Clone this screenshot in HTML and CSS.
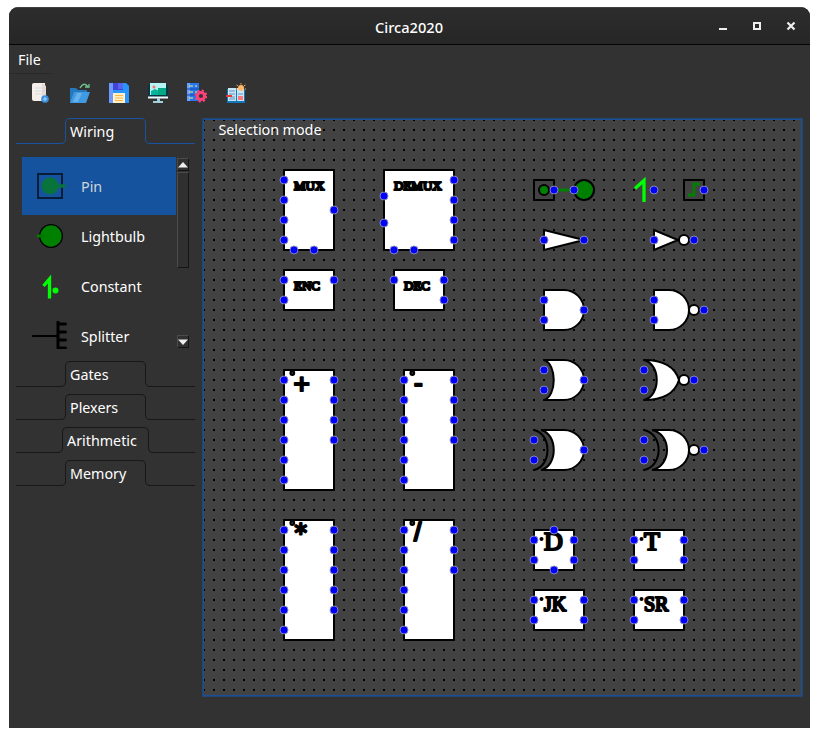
FILE: index.html
```html
<!DOCTYPE html>
<html lang="en">
<head>
<meta charset="utf-8">
<title>Circa2020</title>
<link rel="stylesheet" href="styles.css">
</head>
<body>
<div class="window">
  <header class="titlebar">
    <span class="title">Circa2020</span>
    <svg class="controls" width="80" height="12" viewBox="0 0 80 12"><path d="M1 8h8v2H1z" fill="#eee"/><path d="M36 3h6v6h-6z" fill="none" stroke="#eee" stroke-width="2"/><path d="M69.500 2.500l7 7M76.500 2.500l-7 7" stroke="#eee" stroke-width="2.200"/></svg>
  </header>
  <nav class="menubar"><span class="menu">File</span></nav>
  <div class="toolbar">
    <svg width="20" height="20" viewBox="0 0 20 20"><path d="M3 0h11v18H3q-2 0-2-2V2q0-2 2-2z" fill="#f5eeeb"/><path d="M11 0l4 3v13h-4z" fill="#e5d9d7"/><path d="M4 5h7M4 8h8M4 11h7" stroke="#d5dcde"/><circle cx="14" cy="16" r="3.800" fill="#3f91df"/><path d="M12 16h4M14 14v4" stroke="#a8d6ff"/></svg>
    <svg width="20" height="20" viewBox="0 0 20 20"><path d="M0 19V5h6l2 2h9v4z" fill="#2478bd"/><path d="M4 9h16l-4 11H0z" fill="#4199e2"/><path d="M7 10h5L8 19H3z" fill="#65b2ed"/><path d="M10 5q4-7 8-1" fill="none" stroke="#70c58d" stroke-width="1.500"/><path d="M15 4h4V1" fill="none" stroke="#70c58d" stroke-width="1.300"/></svg>
    <svg width="20" height="20" viewBox="0 0 20 20"><path d="M0 0h17l3 3v17H0z" fill="#2895ff"/><path d="M0 0h4v20H0z" fill="#6e9bff"/><path d="M4 0h10v7H4z" fill="#4044d7"/><path d="M9 0h5v6H9z" fill="#5963ed"/><path d="M4 10h12v10H4z" fill="#fff0c7"/><path d="M6 12.500h8M6 15h8M6 17.500h8" stroke="#ffb844"/></svg>
    <svg width="20" height="20" viewBox="0 0 20 20"><path d="M0 2h20v12H0z" fill="#083443"/><path d="M2 0h16v12H2z" fill="#b6f3f4"/><path d="M3 8l4-2 4 2 6-3v7H3z" fill="#05b49b"/><path d="M10 5h8v7h-8z" fill="#00a884"/><circle cx="6" cy="4" r="1.500" fill="#ff746d"/><path d="M0 13.500h20v2H0z" fill="#effcff"/><path d="M9 15h3v3h3v2H5v-2h4z" fill="#a4cedb"/></svg>
    <svg width="20" height="20" viewBox="0 0 20 20"><path d="M0 0h12v18H0z" fill="#2677ed"/><path d="M0 0h3v18H0z" fill="#64a0ff"/><path d="M0 6h12M0 12h12" stroke="#174bae"/><path d="M2 3h4M2 9h4M2 15h4" stroke="#ffe66c"/><path d="M8 3h2M8 9h2" stroke="#ffe66c"/><circle cx="14" cy="13" r="3.600" fill="#323232" stroke="#fc4279" stroke-width="3"/><circle cx="14" cy="13" r="5.500" fill="none" stroke="#fc4279" stroke-width="2" stroke-dasharray="2.160"/></svg>
    <svg width="20" height="20" viewBox="0 0 20 20"><path d="M1 6h18v14H1z" fill="#1177b6"/><path d="M2 5h8v13H2zM11 5h7v13h-7z" fill="#c9e6f6"/><path d="M3 8h6M3 11h6M12 11h5M4 14h5M3 16h6" stroke="#5994bc"/><path d="M0 12h6v2H0z" fill="#e83737"/><path d="M12 13h5v4h-5z" fill="#ff7777"/><circle cx="15" cy="5" r="3" fill="#ffb96d"/><path d="M15 0v1.500M10.500 2l1.500 1M19.500 2L18 3M10 6h1M19 6h1" stroke="#ffad38"/></svg>
  </div>
  <main class="workspace">
    <aside class="sidebar">
      <div class="tab active"><svg width="179" height="26" viewBox="0 0 179 26"><path d="M0 25.500H45Q49.500 25.500 49.500 21V5Q49.500.500 54 .500H125Q129.500.500 129.500 5V21Q129.500 25.500 134 25.500H179"/></svg><span class="tab-label">Wiring</span></div>
      <div class="panel">
        <div class="list">
          <div class="item selected"><svg width="40" height="30" viewBox="32 171 40 30"><path d="M38 174h24v24H38z" fill="none" stroke="#071d38" stroke-width="2"/><path d="M54 186h10" stroke="#08743b" stroke-width="3.500" stroke-linecap="round"/><circle cx="50" cy="186" r="8.500" fill="#08743b"/></svg><span>Pin</span></div>
          <div class="item"><svg width="40" height="30" viewBox="32 221 40 30"><circle cx="51" cy="236" r="11.300" fill="#008000" stroke="#000" stroke-width="1.300"/><path d="M38 236h4" stroke="#007800" stroke-width="3" stroke-linecap="round"/></svg><span>Lightbulb</span></div>
          <div class="item"><svg width="40" height="30" viewBox="32 271 40 30"><path d="M43.500 286l6-7v19.500" fill="none" stroke="#0f0" stroke-width="3.300"/><circle cx="55.500" cy="290.500" r="3" fill="#0f0"/></svg><span>Constant</span></div>
          <div class="item"><svg width="40" height="30" viewBox="32 321 40 30"><path d="M33 336h25" stroke="#000" stroke-width="2.200" stroke-linecap="round"/><path d="M58 322v27M58 324h7.500M58 332h7.500M58 340h7.500M58 348h7.500" stroke="#000" stroke-width="3" stroke-linecap="round"/></svg><span>Splitter</span></div>
        </div>
        <div class="scrollbar">
          <div class="arrow"><svg width="10" height="6" viewBox="0 0 10 6"><path d="M0 5.500L5 0l5 5.500z" fill="#eee"/></svg></div>
          <div class="thumb"></div>
          <div class="arrow down"><svg width="10" height="6" viewBox="0 0 10 6"><path d="M0 .500h10L5 6z" fill="#eee"/></svg></div>
        </div>
      </div>
      <div class="tab"><svg width="179" height="26" viewBox="0 0 179 26"><path d="M0 25.500H45Q49.500 25.500 49.500 21V5Q49.500.500 54 .500H125Q129.500.500 129.500 5V21Q129.500 25.500 134 25.500H179"/></svg><span class="tab-label">Gates</span></div>
      <div class="tab"><svg width="179" height="26" viewBox="0 0 179 26"><path d="M0 25.500H45Q49.500 25.500 49.500 21V5Q49.500.500 54 .500H125Q129.500.500 129.500 5V21Q129.500 25.500 134 25.500H179"/></svg><span class="tab-label">Plexers</span></div>
      <div class="tab wide"><svg width="179" height="26" viewBox="0 0 179 26"><path d="M0 25.500H42Q46.500 25.500 46.500 21V5Q46.500.500 51 .500H128Q132.500.500 132.500 5V21Q132.500 25.500 137 25.500H179"/></svg><span class="tab-label">Arithmetic</span></div>
      <div class="tab"><svg width="179" height="26" viewBox="0 0 179 26"><path d="M0 25.500H45Q49.500 25.500 49.500 21V5Q49.500.500 54 .500H125Q129.500.500 129.500 5V21Q129.500 25.500 134 25.500H179"/></svg><span class="tab-label">Memory</span></div>
    </aside>
    <svg class="canvas" width="601" height="579" viewBox="202 118 601 579">
      <defs>
        <pattern id="grid" x="203" y="119" width="10" height="10" patternUnits="userSpaceOnUse"><path d="M0 0h2v2H0z" fill="#000"/></pattern>
        <marker id="port" markerUnits="userSpaceOnUse" markerWidth="12" markerHeight="12" refX="6" refY="6"><circle cx="6" cy="6" r="4" fill="#00f" stroke="#8585bd"/></marker>
      </defs>
      <path d="M202 118h601v579H202z" fill="#424242"/>
      <path d="M202 118h601v579H202z" fill="url(#grid)"/>
      <path d="M202.500 118.500h600v578h-600z" fill="none" stroke="#26456f"/>
      <path d="M203.500 119.500h598v576h-598z" fill="none" stroke="#17509a"/>
      <text class="mode" x="218.500" y="135" textLength="103">Selection mode</text>

      <g class="part">
        <path d="M284 170h50v80h-50zM384 170h70v80h-70zM284 270h50v40h-50zM394 270h50v40h-50z"/>
        <path d="M284 370h50v120h-50zM404 370h50v120h-50zM284 520h50v120h-50zM404 520h50v120h-50z"/>
        <path d="M534 530h40v40h-40zM634 530h50v40h-50zM534 590h50v40h-50zM634 590h50v40h-50z"/>
        <path d="M544 230l40 10-40 10zM654 230l24 10-24 10z"/>
        <path d="M544 290h20a20 20 0 0 1 0 40h-20zM654 290h15a20 20 0 0 1 0 40h-15z"/>
        <path d="M544 360h20a20 20 0 0 1 0 40h-20C557 396 557 364 544 360z"/>
        <path d="M644 360C664 360 675 367 679 380C675 393 664 400 644 400C661 396 661 364 644 360z"/>
        <path d="M541 430h23a20 20 0 0 1 0 40h-23C558 466 558 434 541 430z"/>
        <path d="M652 430h17a20 20 0 0 1 0 40h-17C672 466 672 434 652 430z"/>
      </g>
      <g class="wire">
        <path d="M534 430C552 434 552 466 534 470M644 430C663.500 434 663.500 466 644 470"/>
        <path d="M534 180h20v20h-20zM684 180h20v20h-20z"/>
      </g>
      <g class="part bubble"><circle cx="684" cy="240" r="5"/><circle cx="694" cy="310" r="5"/><circle cx="684" cy="380" r="5"/><circle cx="694" cy="450" r="5"/></g>
      <circle cx="544" cy="190" r="5" fill="#008000" stroke="#000" stroke-width="2"/>
      <circle cx="584" cy="190" r="10" fill="#008000" stroke="#000" stroke-width="2"/>
      <path d="M554 190h20M688 195h6v-11h6" fill="none" stroke="#008000" stroke-width="2.800"/>
      <path d="M635 188.500l9-8v21.500" fill="none" stroke="#0f0" stroke-width="3.300"/>

      <g class="serif">
        <text x="294" y="190" font-size="13">MUX</text><text x="394" y="190" font-size="13">DEMUX</text>
        <text x="294" y="290" font-size="13">ENC</text><text x="404" y="290" font-size="13">DEC</text>
        <text x="544" y="550" font-size="26">D</text><text x="644" y="550" font-size="26">T</text>
        <text x="544" y="610.500" font-size="20">JK</text><text x="644" y="610.500" font-size="20">SR</text>
      </g>
      <g class="sans"><text x="293.500" y="392.500" font-size="28">+</text><text x="414" y="391.500">-</text><text class="star" x="294.500" y="540.500" font-size="25">*</text><text x="414" y="540.500">/</text></g>
      <g fill="#333" stroke="#000" stroke-width="2"><circle cx="292.300" cy="373" r="1.900"/><circle cx="412.300" cy="373" r="1.900"/><circle cx="292.300" cy="523" r="1.900"/><circle cx="412.300" cy="523" r="1.900"/></g>
      <circle cx="541.500" cy="539" r="2"/><circle cx="641.500" cy="539" r="2"/><circle cx="541.500" cy="599" r="2"/><circle cx="641.500" cy="599" r="2"/>

      <g class="ports">
        <path d="M284 180V200V220V240L294 250H314L334 210"/>
        <path d="M384 196V223L394 250H414L454 240V220V200V180"/>
        <path d="M284 280V300L334 280"/>
        <path d="M394 280H444V300"/>
        <path d="M284 380V400V420V440V460V480L334 440V420V400V380"/>
        <path d="M404 380V400V420V440V460V480L454 440V420V400V380"/>
        <path d="M284 530V550V570V590V610V630L334 610V590V570V550V530"/>
        <path d="M404 530V550V570V590V610V630L454 570V550V530"/>
        <path d="M554 190H574L654 190H704L694 240H654H584H544"/>
        <path d="M544 300V320L584 310L654 300V320L704 310"/>
        <path d="M544 370V390L584 380L644 370V390L694 380"/>
        <path d="M534 440V460L584 450L644 440V460L704 450"/>
        <path d="M534 540V560L554 570L574 560V540L554 530"/>
        <path d="M634 540V560H684V540"/>
        <path d="M534 600V620H584V600"/>
        <path d="M634 600V620H684V600"/>
      </g>
    </svg>
  </main>
</div>
</body>
</html>
```
FILE: styles.css
```css
* { box-sizing: border-box; }
body {
  margin: 0;
  padding: 7px 9px 9px;
  background: #fff;
  color: #fff;
  font: 14.3px/20px "Noto Sans", sans-serif;
}
svg { display: block; flex: none; }
.window {
  width: 801px;
  height: 721px;
  background: #323232;
  border-radius: 9px 9px 0 0;
  overflow: hidden;
}
.titlebar {
  height: 38px;
  display: grid;
  grid-template-columns: 1fr auto 1fr;
  align-items: center;
  padding-right: 12px;
  padding-left: 11px;
  border-top: 1px solid #404040;
  border-bottom: 1px solid #050505;
  background: linear-gradient(#2d2d2d, #262626);
}
.title { grid-column: 2; font-weight: 500; font-size: 14.6px; padding-top: 1px; }
.controls { justify-self: end; }
.menubar { height: 29px; display: flex; }
.menu {
  width: 42px;
  padding: 5px 0 0 9px;
  border-bottom: 1px solid #292929;
}
.toolbar { display: flex; gap: 19px; padding: 9px 22px 0; height: 44px; }
.workspace { display: flex; height: 610px; }
.sidebar { width: 193px; padding-left: 7px; }
.tab { display: grid; height: 26px; margin-bottom: 7px; }
.tab > * { grid-area: 1 / 1; }
.tab path { fill: none; stroke: #181818; }
.tab.active path { stroke: #1953a0; }
.tab-label { padding: 4px 0 0 54px; }
.wide .tab-label { padding-left: 51px; }
.tab.active { margin-bottom: 13px; }
.panel {
  display: flex;
  width: 167px;
  height: 192px;
  margin: 0 0 12px 6px;
}
.list { width: 154px; overflow: hidden; }
.item {
  display: flex;
  align-items: center;
  height: 58px;
  padding-left: 10px;
  gap: 9px;
  margin-bottom: -8px;
}
.item span { padding-top: 2px; }
.selected { background: #15539e; color: #d0d5dc; }
.scrollbar {
  width: 13px;
  padding: 1px 0 1px 1px;
  display: flex;
  flex-direction: column;
}
.arrow, .thumb {
  width: 12px;
  border: 1px solid #4b4b4b;
  border-right-color: #151515;
  border-bottom-color: #151515;
  background: #303030;
}
.arrow { height: 13px; padding-top: 3px; }
.thumb { height: 96px; margin-top: 1px; }
.down { margin-top: auto; }
.mode { fill: #fff; font-size: 14.4px; }
.part { fill: #fff; stroke: #000; stroke-width: 2; }
.wire { fill: none; stroke: #000; stroke-width: 2; }
.serif, .sans { fill: #222; stroke: #000; stroke-width: 2.2; stroke-linejoin: round; }
.serif { font-family: "Liberation Serif", serif; }
.sans { font-family: "Liberation Sans", sans-serif; font-size: 26px; }
.star { font-family: "DejaVu Sans", sans-serif; }
.ports path {
  fill: none;
  stroke: none;
  marker-start: url(#port);
  marker-mid: url(#port);
  marker-end: url(#port);
}
```
